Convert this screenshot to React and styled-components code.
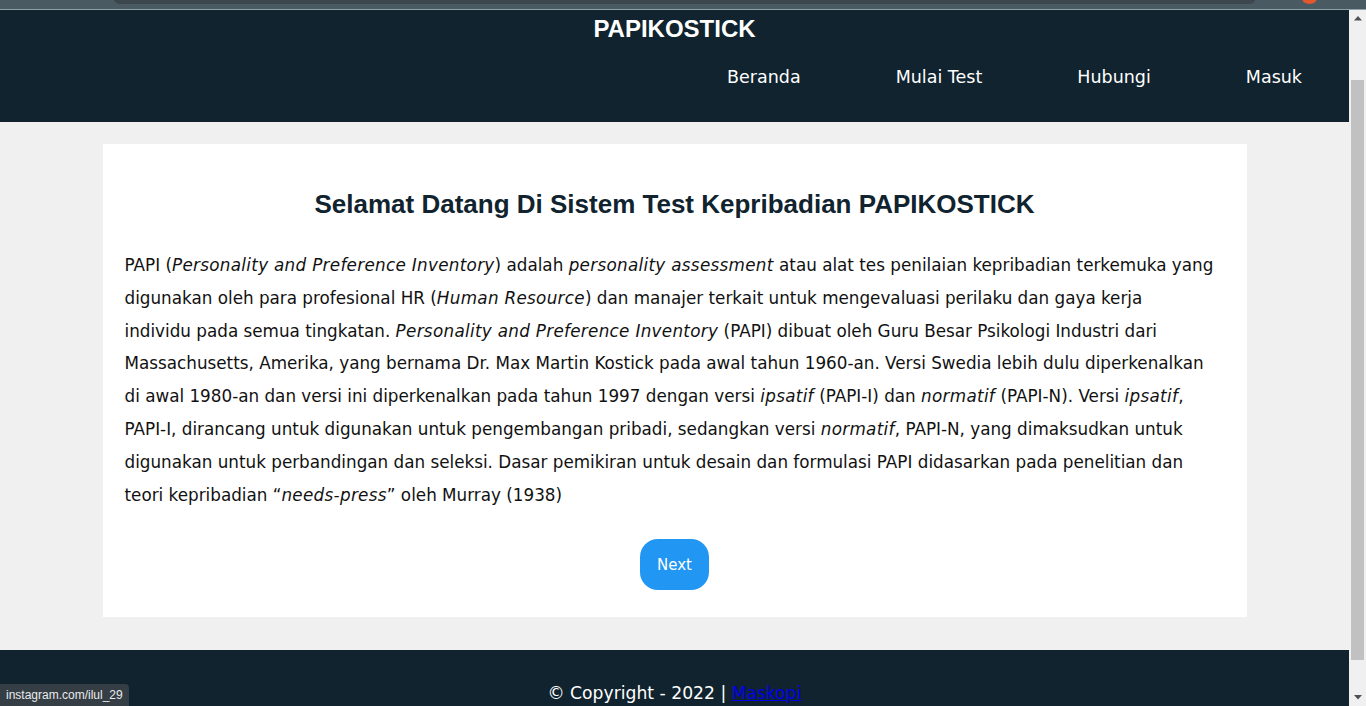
import React from "react";
import styled, { createGlobalStyle } from "styled-components";

const GlobalStyle = createGlobalStyle`
  html, body {
    margin: 0;
    padding: 0;
    height: 100%;
    overflow: hidden;
  }
  body {
    font-family: "DejaVu Sans", sans-serif;
    background: #f0f0f0;
  }
`;

const Shell = styled.div`
  height: 100vh;
  display: flex;
  flex-direction: column;
  position: relative;
`;

// strip of the browser above the page
const Strip = styled.div`
  height: 9px;
  flex: none;
  background: #4a5a63;
  border-bottom: 1px solid #8fa0a6;
  position: relative;
  overflow: hidden;
`;

const StripBar = styled.div`
  position: absolute;
  left: 113px;
  right: 110px;
  top: -10px;
  height: 14px;
  background: #3c474d;
  border-radius: 8px;
`;

const StripDot = styled.div`
  position: absolute;
  left: 1302px;
  top: -8px;
  width: 15px;
  height: 12px;
  border-radius: 50%;
  background: #e2582c;
`;

const Viewport = styled.div`
  flex: 1;
  display: flex;
  min-height: 0;
`;

const Page = styled.div`
  flex: 1;
  overflow: hidden;
  background: #f0f0f0;
`;

const Header = styled.header`
  background: #10232e;
  height: 112px;
  display: flex;
  flex-direction: column;
`;

const Brand = styled.h1`
  margin: 0;
  padding-top: 4px;
  text-align: center;
  color: #fff;
  font-family: "Liberation Sans", Arial, sans-serif;
  font-weight: 700;
  font-size: 24px;
  line-height: 30px;
`;

const Nav = styled.nav`
  display: flex;
  justify-content: flex-end;
  margin-top: 21px;
`;

const NavItem = styled.a`
  color: #fff;
  font-size: 17.5px;
  padding: 0 47px 0 48px;
  text-decoration: none;
  line-height: 24px;
`;

const Main = styled.main`
  padding: 22px 0 33px;
`;

const Card = styled.section`
  width: 1144px;
  margin: 0 auto;
  background: #fff;
  padding: 42px 22px 27px;
  box-sizing: border-box;
  display: flex;
  flex-direction: column;
  align-items: center;
`;

const Title = styled.h2`
  margin: 0 0 27px;
  color: #10232e;
  font-family: "Liberation Sans", Arial, sans-serif;
  font-weight: 700;
  font-size: 26px;
  line-height: 36px;
  text-align: center;
`;

const Text = styled.p`
  margin: 0;
  color: #111;
  font-size: 16.8px;
  line-height: 32.8px;
  white-space: nowrap;
  align-self: stretch;

  em {
    font-style: italic;
    letter-spacing: 0.3px;
  }
`;

const Button = styled.button`
  margin-top: 28px;
  width: 69px;
  height: 51px;
  border: none;
  border-radius: 18px;
  background: #2196f3;
  color: #fff;
  font-family: "DejaVu Sans", sans-serif;
  font-size: 15px;
  cursor: pointer;
`;

const Footer = styled.footer`
  background: #10232e;
  height: 120px;
  padding-top: 31px;
  box-sizing: border-box;
  text-align: center;
  color: #fff;
  font-size: 17.2px;
  line-height: 24px;

  a {
    color: #0000ee;
  }
`;

const Scrollbar = styled.div`
  width: 17px;
  flex: none;
  background: #f0f0f0;
  display: flex;
  flex-direction: column;
  align-items: center;
`;

const Arrow = styled.div`
  height: 17px;
  width: 17px;
  display: flex;
  align-items: center;
  justify-content: center;
`;

const Thumb = styled.div`
  width: 13px;
  height: 580px;
  margin-top: 53px;
  background: #c1c1c1;
  flex: none;
`;

const Spacer = styled.div`
  flex: 1;
`;

const Status = styled.div`
  position: absolute;
  left: 0;
  bottom: 0;
  height: 22px;
  padding: 0 6px;
  background: #353e44;
  color: #e8eaed;
  font-family: "Liberation Sans", Arial, sans-serif;
  font-size: 12px;
  line-height: 22px;
  border-top-right-radius: 4px;
`;

const ArrowIcon = ({ down }) => (
  <svg width="8" height="5" viewBox="0 0 8 5">
    <path d={down ? "M0 0H8L4 4.5Z" : "M0 4.5H8L4 0Z"} fill="#505050" />
  </svg>
);

export default function App() {
  return (
    <Shell>
      <GlobalStyle />
      <Strip>
        <StripBar />
        <StripDot />
      </Strip>
      <Viewport>
        <Page>
          <Header>
            <Brand>PAPIKOSTICK</Brand>
            <Nav>
              <NavItem href="#">Beranda</NavItem>
              <NavItem href="#">Mulai Test</NavItem>
              <NavItem href="#">Hubungi</NavItem>
              <NavItem href="#">Masuk</NavItem>
            </Nav>
          </Header>
          <Main>
            <Card>
              <Title>Selamat Datang Di Sistem Test Kepribadian PAPIKOSTICK</Title>
              <Text>
                PAPI (<em>Personality and Preference Inventory</em>) adalah{" "}
                <em>personality assessment</em> atau alat tes penilaian kepribadian
                terkemuka yang
                <br />
                digunakan oleh para profesional HR (<em>Human Resource</em>) dan manajer
                terkait untuk mengevaluasi perilaku dan gaya kerja
                <br />
                individu pada semua tingkatan. <em>Personality and Preference Inventory</em>{" "}
                (PAPI) dibuat oleh Guru Besar Psikologi Industri dari
                <br />
                Massachusetts, Amerika, yang bernama Dr. Max Martin Kostick pada awal tahun
                1960-an. Versi Swedia lebih dulu diperkenalkan
                <br />
                di awal 1980-an dan versi ini diperkenalkan pada tahun 1997 dengan versi{" "}
                <em>ipsatif</em> (PAPI-I) dan <em>normatif</em> (PAPI-N). Versi{" "}
                <em>ipsatif</em>,
                <br />
                PAPI-I, dirancang untuk digunakan untuk pengembangan pribadi, sedangkan versi{" "}
                <em>normatif</em>, PAPI-N, yang dimaksudkan untuk
                <br />
                digunakan untuk perbandingan dan seleksi. Dasar pemikiran untuk desain dan
                formulasi PAPI didasarkan pada penelitian dan
                <br />
                teori kepribadian “<em>needs-press</em>” oleh Murray (1938)
              </Text>
              <Button>Next</Button>
            </Card>
          </Main>
          <Footer>
            © Copyright - 2022 | <a href="#">Maskopi</a>
          </Footer>
        </Page>
        <Scrollbar>
          <Arrow>
            <ArrowIcon />
          </Arrow>
          <Thumb />
          <Spacer />
          <Arrow>
            <ArrowIcon down />
          </Arrow>
        </Scrollbar>
      </Viewport>
      <Status>instagram.com/ilul_29</Status>
    </Shell>
  );
}
